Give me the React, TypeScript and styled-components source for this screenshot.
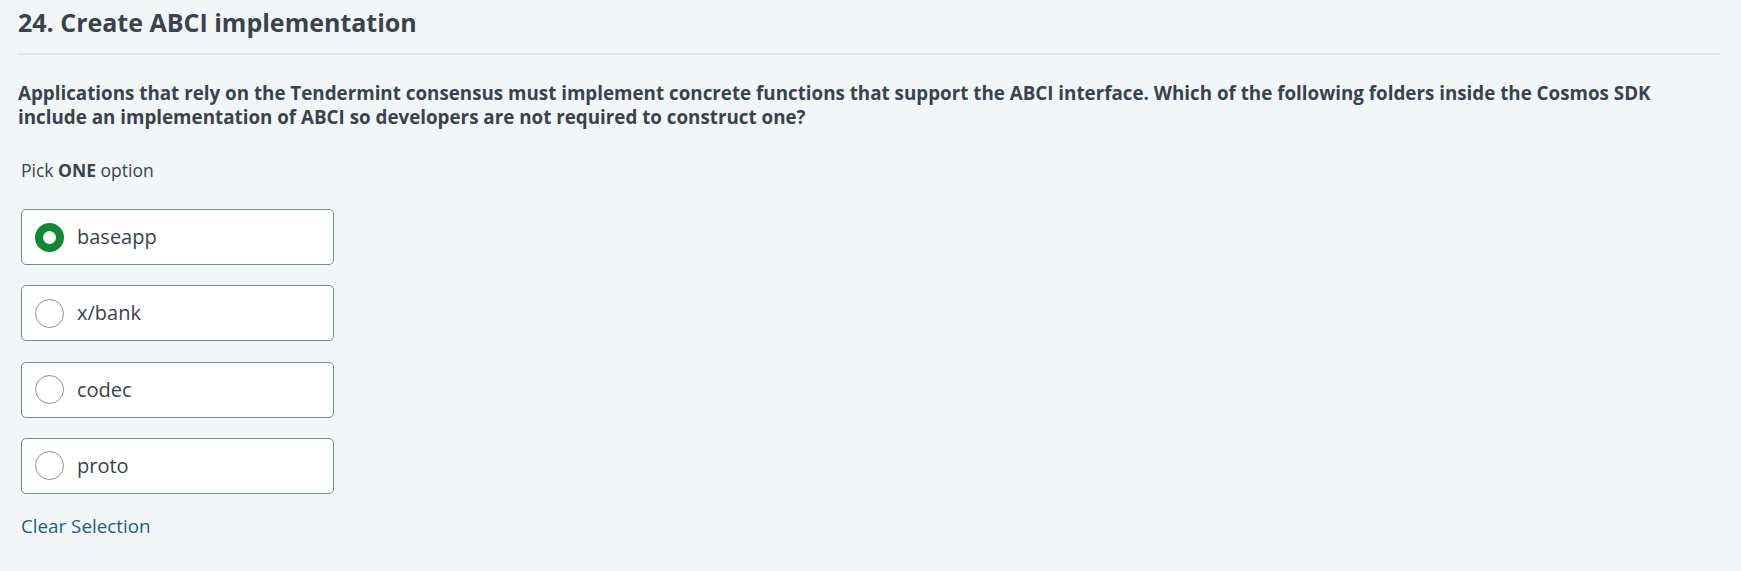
import React, { useState } from "react";
import styled, { createGlobalStyle } from "styled-components";

const GlobalStyle = createGlobalStyle`
  html, body {
    margin: 0;
    padding: 0;
    background: #f3f6f7;
  }
  body {
    font-family: "Open Sans", "Noto Sans", sans-serif;
    color: #39424e;
  }
`;

const Page = styled.div`
  padding: 5px 21px 0 18px;
`;

const Header = styled.div`
  padding-bottom: 14px;
  border-bottom: 2px solid #e2e9ea;
`;

const Title = styled.h1`
  margin: 0;
  font-size: 25px;
  line-height: 34px;
  font-weight: 700;
  color: #39424e;
`;

const Question = styled.p`
  margin: 25.5px 0 0;
  font-size: 18.8px;
  line-height: 24px;
  font-weight: 700;
  color: #39424e;
`;

const Options = styled.div`
  padding-left: 3px;
  display: flex;
  flex-direction: column;
`;

const Hint = styled.div`
  margin-top: 29.5px;
  font-size: 17.5px;
  line-height: 24px;
  color: #39424e;
  strong {
    font-weight: 700;
  }
`;

const List = styled.div`
  margin-top: 27px;
  display: flex;
  flex-direction: column;
  gap: 20.33px;
`;

const Choice = styled.label`
  box-sizing: border-box;
  width: 313px;
  height: 56px;
  display: flex;
  align-items: center;
  gap: 13px;
  padding: 0 13px;
  background: #ffffff;
  border: 1px solid #738b91;
  border-radius: 5px;
  cursor: pointer;
`;

const Radio = styled.span<{ $checked: boolean }>`
  box-sizing: border-box;
  width: 29px;
  height: 29px;
  border-radius: 50%;
  flex: none;
  background: #ffffff;
  border: ${(p) => (p.$checked ? "8px solid #0e8a34" : "1px solid #7f959a")};
`;

const ChoiceText = styled.span`
  font-size: 20px;
  line-height: 28px;
  color: #39424e;
`;

const Clear = styled.button`
  align-self: flex-start;
  margin-top: 19.5px;
  padding: 0;
  border: none;
  background: none;
  font-family: inherit;
  font-size: 18.8px;
  line-height: 26px;
  color: #1d5c8a;
  cursor: pointer;
`;

const choices = ["baseapp", "x/bank", "codec", "proto"];

export default function App() {
  const [selected, setSelected] = useState<number | null>(0);
  return (
    <>
      <GlobalStyle />
      <Page>
        <Header>
          <Title>24. Create ABCI implementation</Title>
        </Header>
        <Question>
          Applications that rely on the Tendermint consensus must implement concrete functions that support the ABCI
          interface. Which of the following folders inside the Cosmos SDK include an implementation of ABCI so
          developers are not required to construct one?
        </Question>
        <Options>
          <Hint>
            Pick <strong>ONE</strong> option
          </Hint>
          <List>
            {choices.map((c, i) => (
              <Choice key={c} onClick={() => setSelected(i)}>
                <Radio $checked={selected === i} />
                <ChoiceText>{c}</ChoiceText>
              </Choice>
            ))}
          </List>
          <Clear onClick={() => setSelected(null)}>Clear Selection</Clear>
        </Options>
      </Page>
    </>
  );
}
